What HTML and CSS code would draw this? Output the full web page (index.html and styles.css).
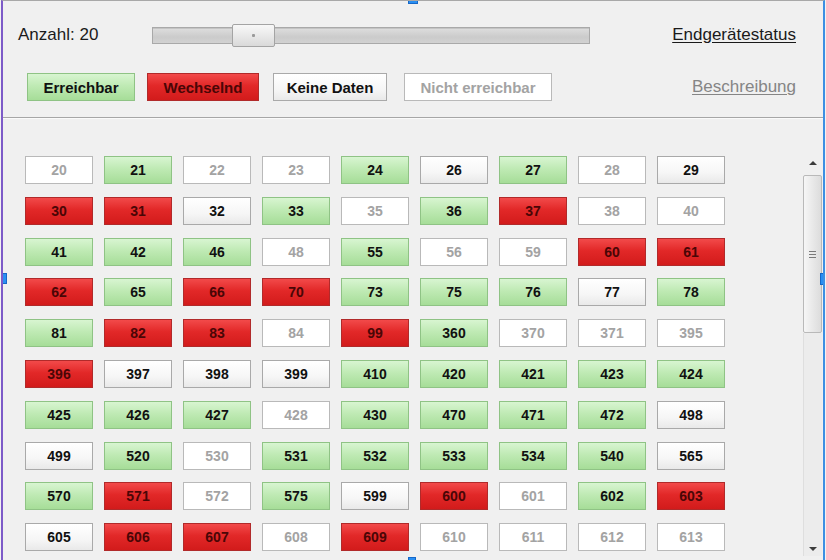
FILE: index.html
```html
<!DOCTYPE html>
<html lang="de">
<head>
<meta charset="utf-8">
<title>Endgerätestatus</title>
<link rel="stylesheet" href="styles.css">
</head>
<body>
<div class="app">
  <header class="toolbar">
    <div class="row row-top">
      <span class="count">Anzahl: 20</span>
      <div class="slider">
        <div class="slider-thumb"><span class="slider-dot"></span></div>
      </div>
      <a class="link">Endgerätestatus</a>
    </div>
    <div class="row row-legend">
      <span class="tag on legend-on">Erreichbar</span>
      <span class="tag flip legend-flip">Wechselnd</span>
      <span class="tag nodata legend-nodata">Keine Daten</span>
      <span class="tag off legend-off">Nicht erreichbar</span>
      <a class="link link-muted">Beschreibung</a>
    </div>
  </header>
  <div class="sep"></div>
  <section class="panel">
    <div class="viewport">
      <div class="grid">
        <span class="cell off">20</span><span class="cell on">21</span><span class="cell off">22</span><span class="cell off">23</span><span class="cell on">24</span><span class="cell nodata">26</span><span class="cell on">27</span><span class="cell off">28</span><span class="cell nodata">29</span>
        <span class="cell flip">30</span><span class="cell flip">31</span><span class="cell nodata">32</span><span class="cell on">33</span><span class="cell off">35</span><span class="cell on">36</span><span class="cell flip">37</span><span class="cell off">38</span><span class="cell off">40</span>
        <span class="cell on">41</span><span class="cell on">42</span><span class="cell on">46</span><span class="cell off">48</span><span class="cell on">55</span><span class="cell off">56</span><span class="cell off">59</span><span class="cell flip">60</span><span class="cell flip">61</span>
        <span class="cell flip">62</span><span class="cell on">65</span><span class="cell flip">66</span><span class="cell flip">70</span><span class="cell on">73</span><span class="cell on">75</span><span class="cell on">76</span><span class="cell nodata">77</span><span class="cell on">78</span>
        <span class="cell on">81</span><span class="cell flip">82</span><span class="cell flip">83</span><span class="cell off">84</span><span class="cell flip">99</span><span class="cell on">360</span><span class="cell off">370</span><span class="cell off">371</span><span class="cell off">395</span>
        <span class="cell flip">396</span><span class="cell nodata">397</span><span class="cell nodata">398</span><span class="cell nodata">399</span><span class="cell on">410</span><span class="cell on">420</span><span class="cell on">421</span><span class="cell on">423</span><span class="cell on">424</span>
        <span class="cell on">425</span><span class="cell on">426</span><span class="cell on">427</span><span class="cell off">428</span><span class="cell on">430</span><span class="cell on">470</span><span class="cell on">471</span><span class="cell on">472</span><span class="cell nodata">498</span>
        <span class="cell nodata">499</span><span class="cell on">520</span><span class="cell off">530</span><span class="cell on">531</span><span class="cell on">532</span><span class="cell on">533</span><span class="cell on">534</span><span class="cell on">540</span><span class="cell nodata">565</span>
        <span class="cell on">570</span><span class="cell flip">571</span><span class="cell off">572</span><span class="cell on">575</span><span class="cell nodata">599</span><span class="cell flip">600</span><span class="cell off">601</span><span class="cell on">602</span><span class="cell flip">603</span>
        <span class="cell nodata">605</span><span class="cell flip">606</span><span class="cell flip">607</span><span class="cell off">608</span><span class="cell flip">609</span><span class="cell off">610</span><span class="cell off">611</span><span class="cell off">612</span><span class="cell off">613</span>
      </div>
    </div>
    <div class="scrollbar">
      <div class="sb-btn sb-up"><span class="arrow-up"></span></div>
      <div class="sb-thumb"><span class="grip"></span></div>
      <div class="sb-track"></div>
      <div class="sb-btn sb-down"><span class="arrow-down"></span></div>
    </div>
  </section>
  <span class="handle handle-top"></span>
  <span class="handle handle-bottom"></span>
  <span class="handle handle-left"></span>
  <span class="handle handle-right"></span>
</div>
</body>
</html>
```

FILE: styles.css
```css
html, body {
  margin: 0;
  padding: 0;
  background: #f2f2f2;
  overflow: hidden;
}

.app {
  position: relative;
  box-sizing: border-box;
  width: 824px;
  height: 560px;
  margin: 0 1px;
  background: #f0f0f0;
  border-top: 1px solid #a8a8a8;
  border-left: 2px solid #7d5bc8;
  border-right: 2px solid #3d8fe3;
  font-family: "Liberation Sans", Arial, sans-serif;
  color: #1a1a1a;
  display: flex;
  flex-direction: column;
  overflow: hidden;
}

.toolbar {
  display: flex;
  flex-direction: column;
}

.row {
  display: flex;
  align-items: center;
}

.row-top {
  height: 26px;
  padding: 21px 27px 0 15px;
}

.count {
  width: 134px;
  font-size: 17px;
  color: #1a1a1a;
}

.slider {
  position: relative;
  box-sizing: border-box;
  width: 438px;
  height: 17px;
  border: 1px solid #a9a9a9;
  background: linear-gradient(#dedede, #cbcbcb 60%, #d2d2d2);
  box-shadow: inset 0 1px 0 #c4c4c4;
}

.slider-thumb {
  position: absolute;
  left: 79px;
  top: -4px;
  box-sizing: border-box;
  width: 43px;
  height: 23px;
  border: 1px solid #a4a4a4;
  border-radius: 2px;
  background: linear-gradient(#f8f8f8, #e6e6e6 60%, #d9d9d9);
  display: flex;
  align-items: center;
  justify-content: center;
}

.slider-dot {
  width: 3px;
  height: 3px;
  border-radius: 1px;
  background: #9a9a9a;
}

.link {
  margin-left: auto;
  font-size: 17px;
  color: #1a1a1a;
  text-decoration: underline;
  text-underline-offset: 2px;
}

.link-muted {
  color: #858585;
}

.row-legend {
  height: 28px;
  margin-top: 25px;
  padding: 0 27px 0 24px;
}

.tag {
  box-sizing: border-box;
  height: 28px;
  border: 1px solid;
  display: flex;
  align-items: center;
  justify-content: center;
  font-size: 15px;
  font-weight: bold;
}

.legend-on { width: 108px; }
.legend-flip { width: 112px; margin-left: 12px; }
.legend-nodata { width: 114px; margin-left: 14px; }
.legend-off { width: 148px; margin-left: 17px; }

.sep {
  height: 1px;
  margin-top: 16px;
  background: #a6a6a6;
  border-bottom: 1px solid #fafafa;
}

.panel {
  display: flex;
  height: 406px;
  margin-top: 31px;
  padding-right: 1px;
}

.viewport {
  flex: 1;
  overflow: hidden;
  padding: 6px 0 0 22px;
}

.grid {
  display: grid;
  grid-template-columns: repeat(9, 68px);
  grid-auto-rows: 28px;
  column-gap: 11px;
  row-gap: 12.8px;
}

.cell {
  box-sizing: border-box;
  border: 1px solid;
  display: flex;
  align-items: center;
  justify-content: center;
  font-size: 14px;
  font-weight: bold;
}

.on {
  background: linear-gradient(#d8f5d1, #bfeab4 45%, #a6dd98);
  border-color: #8fc385;
  color: #111111;
}

.flip {
  background: linear-gradient(#f24a4a, #e22828 45%, #d21b1b);
  border-color: #b12a2a;
  color: #4a0606;
}

.nodata {
  background: linear-gradient(#ffffff, #f6f6f6 60%, #e9e9e9);
  border-color: #a9a9a9;
  color: #111111;
}

.off {
  background: #ffffff;
  border-color: #b9b9b9;
  color: #a3a3a3;
}

.scrollbar {
  width: 19px;
  display: flex;
  flex-direction: column;
}

.sb-btn {
  display: flex;
  align-items: center;
  justify-content: center;
}

.sb-up {
  height: 25px;
}

.sb-down {
  height: 14px;
  background: #ececec;
  border-left: 1px solid #dedede;
}

.arrow-up {
  width: 0;
  height: 0;
  border-left: 4px solid transparent;
  border-right: 4px solid transparent;
  border-bottom: 4px solid #3c3c3c;
}

.arrow-down {
  width: 0;
  height: 0;
  border-left: 4px solid transparent;
  border-right: 4px solid transparent;
  border-top: 4px solid #3c3c3c;
}

.sb-thumb {
  box-sizing: border-box;
  height: 158px;
  border: 1px solid #b9b9b9;
  border-radius: 2px;
  background: linear-gradient(to right, #f6f6f6, #e9e9e9 50%, #dcdcdc);
  display: flex;
  align-items: center;
  justify-content: center;
}

.grip {
  width: 7px;
  height: 7px;
  background: repeating-linear-gradient(#7a7a7a 0 1px, transparent 1px 3px);
}

.sb-track {
  flex: 1;
  background: #ececec;
  border-left: 1px solid #dedede;
}

.handle {
  position: absolute;
  box-sizing: border-box;
  background: #2a8ff2;
  border: 1px solid #1668c8;
}

.handle-top {
  top: -5px;
  left: 405px;
  width: 10px;
  height: 8px;
}

.handle-bottom {
  bottom: -5px;
  left: 405px;
  width: 8px;
  height: 8px;
}

.handle-left {
  top: 272px;
  left: -3px;
  width: 7px;
  height: 11px;
}

.handle-right {
  top: 272px;
  right: -2px;
  width: 5px;
  height: 12px;
}
```
